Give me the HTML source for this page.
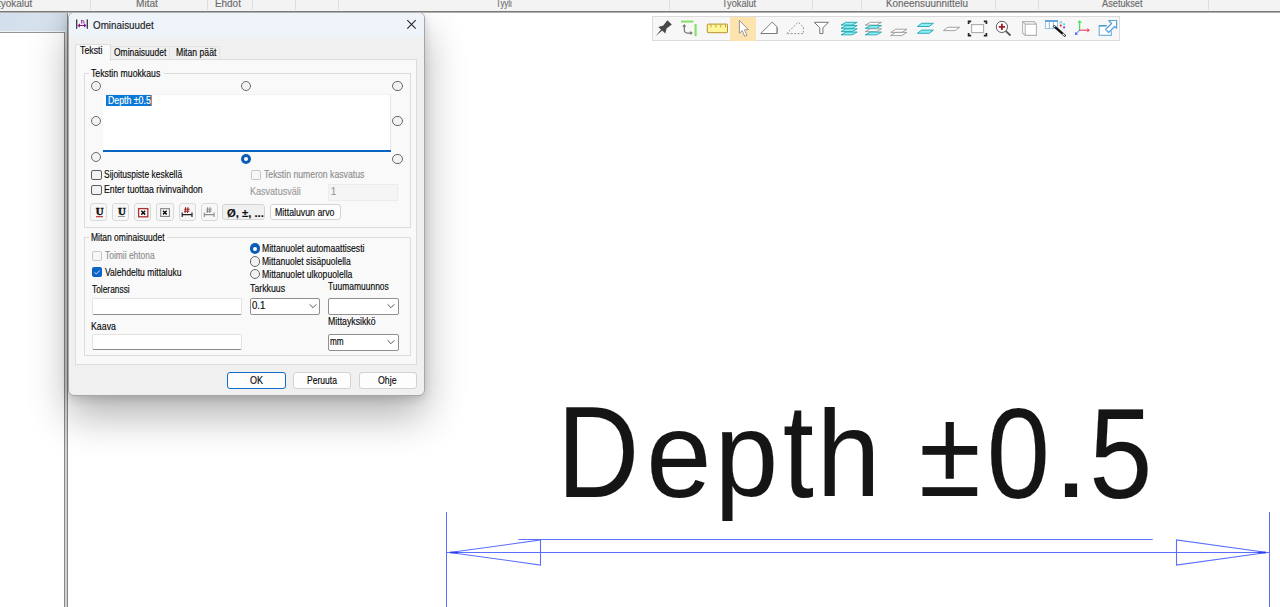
<!DOCTYPE html>
<html><head><meta charset="utf-8"><style>
html,body{margin:0;padding:0;width:1280px;height:607px;overflow:hidden;background:#fff;}
body{position:relative;font-family:"Liberation Sans",sans-serif;}
.b{position:absolute;box-sizing:border-box;}
.t{position:absolute;white-space:nowrap;line-height:1;-webkit-text-stroke:0.15px currentColor;}
</style></head><body>
<div style="position:absolute;left:0;top:0;width:1280px;height:13px;z-index:5;overflow:hidden">
<div class="b" style="left:0px;top:0px;width:1280px;height:11px;background:#f3f3f3;"></div>
<div class="b" style="left:0px;top:11px;width:1280px;height:1px;background:#7a7a7a;"></div>
<div class="b" style="left:0px;top:12px;width:1280px;height:0.6px;background:#b0b0b0;"></div>
<div class="b" style="left:90px;top:0px;width:1px;height:10px;background:#dedede;"></div>
<div class="b" style="left:207px;top:0px;width:1px;height:10px;background:#dedede;"></div>
<div class="b" style="left:252px;top:0px;width:1px;height:10px;background:#dedede;"></div>
<div class="b" style="left:295px;top:0px;width:1px;height:10px;background:#dedede;"></div>
<div class="b" style="left:338px;top:0px;width:1px;height:10px;background:#dedede;"></div>
<div class="b" style="left:669px;top:0px;width:1px;height:10px;background:#dedede;"></div>
<div class="b" style="left:812px;top:0px;width:1px;height:10px;background:#dedede;"></div>
<div class="b" style="left:861px;top:0px;width:1px;height:10px;background:#dedede;"></div>
<div class="b" style="left:995px;top:0px;width:1px;height:10px;background:#dedede;"></div>
<div class="b" style="left:1038px;top:0px;width:1px;height:10px;background:#dedede;"></div>
<div class="b" style="left:1208px;top:0px;width:1px;height:10px;background:#dedede;"></div>
<div class="t" style="left:-1.65px;top:-1.00px;font-size:10px;color:#6b6b6b;transform:scaleX(0.9930);transform-origin:0 0;">työkalut</div>
<div class="t" style="left:136.17px;top:-1.00px;font-size:10px;color:#6b6b6b;transform:scaleX(1.0108);transform-origin:0 0;">Mitat</div>
<div class="t" style="left:215.19px;top:-1.00px;font-size:10px;color:#6b6b6b;transform:scaleX(0.9905);transform-origin:0 0;">Ehdot</div>
<div class="t" style="left:495.82px;top:-1.00px;font-size:10px;color:#6b6b6b;transform:scaleX(0.7887);transform-origin:0 0;">Tyyli</div>
<div class="t" style="left:722.39px;top:-1.00px;font-size:10px;color:#6b6b6b;transform:scaleX(0.9175);transform-origin:0 0;">Työkalut</div>
<div class="t" style="left:886.49px;top:-1.00px;font-size:10px;color:#6b6b6b;transform:scaleX(0.9894);transform-origin:0 0;">Koneensuunnittelu</div>
<div class="t" style="left:1101.78px;top:-1.00px;font-size:10px;color:#6b6b6b;transform:scaleX(0.9220);transform-origin:0 0;">Asetukset</div>
</div>
<div class="b" style="left:0px;top:12px;width:67px;height:19.5px;background:linear-gradient(90deg,#d3dfec,#d7e2ee 70%,#cdd9e6);"></div>
<div class="b" style="left:0px;top:31px;width:65px;height:1px;background:#eef2f6;"></div>
<div class="b" style="left:0px;top:32px;width:65px;height:1px;background:#959595;"></div>
<div class="b" style="left:64px;top:32px;width:1px;height:575px;background:#8a8a8a;"></div>
<div class="b" style="left:65px;top:32px;width:2px;height:575px;background:#d2d2d2;"></div>
<div class="b" style="left:67px;top:12px;width:1px;height:595px;background:#858585;"></div>
<svg class="b" style="left:0;top:0" width="1280" height="607" viewBox="0 0 1280 607">
<g stroke="#5a6eff" stroke-width="1" fill="none">
<line x1="446.5" y1="512" x2="446.5" y2="607"/>
<line x1="1269.5" y1="512" x2="1269.5" y2="607"/>
<line x1="446.5" y1="552.5" x2="1270" y2="552.5"/>
<line x1="518.4" y1="539.5" x2="1152.7" y2="539.5"/>
<path d="M449.8 552.5 L540.5 540 L540.5 565 Z" stroke-width="1.1"/>
<path d="M1266.9 552.5 L1176.5 540 L1176.5 565 Z" stroke-width="1.1"/>
</g>
<line x1="450" y1="552.5" x2="458" y2="552.5" stroke="#2a40f0" stroke-width="1.6"/>
<line x1="1258" y1="552.5" x2="1266" y2="552.5" stroke="#2a40f0" stroke-width="1.6"/>
</svg>
<div class="t" style="left:0;top:0;font-size:129.36px;color:#151515;transform:translate(556.90px,388.00px) scaleX(0.8810);transform-origin:0 0;">D</div>
<div class="t" style="left:0;top:0;font-size:121.84px;color:#151515;transform:translate(646.27px,394.56px) scaleX(0.9620);transform-origin:0 0;">e</div>
<div class="t" style="left:0;top:0;font-size:119.78px;color:#151515;transform:translate(714.65px,395.39px) scaleX(0.9514);transform-origin:0 0;">p</div>
<div class="t" style="left:0;top:0;font-size:132.97px;color:#151515;transform:translate(782.92px,384.96px) scaleX(0.8334);transform-origin:0 0;">t</div>
<div class="t" style="left:0;top:0;font-size:122.96px;color:#151515;transform:translate(816.66px,393.40px) scaleX(0.9311);transform-origin:0 0;">h</div>
<div class="t" style="left:0;top:0;font-size:125.16px;color:#151515;transform:translate(918.94px,391.00px) scaleX(0.8962);transform-origin:0 0;">±</div>
<div class="t" style="left:0;top:0;font-size:128.18px;color:#151515;transform:translate(986.82px,389.50px) scaleX(0.8854);transform-origin:0 0;">0</div>
<div class="t" style="left:0;top:0;font-size:126.00px;color:#151515;transform:translate(1053.49px,391.00px) scaleX(1.0002);transform-origin:0 0;">.</div>
<div class="t" style="left:0;top:0;font-size:127.19px;color:#151515;transform:translate(1089.21px,390.51px) scaleX(0.8913);transform-origin:0 0;">5</div>
<div class="b" style="left:652.3px;top:16px;width:468.2px;height:25px;background:#f7f7f7;border:1px solid #dcdcdc;"></div>
<div class="b" style="left:730px;top:16.5px;width:26px;height:24px;background:#fde3ae;"></div>
<svg class="b" style="left:0;top:0" width="1280" height="50" viewBox="0 0 1280 50"><path d="M667.4 20.2 L671.8 24.5 L666.6 28.4 L665.2 33.4 L662.2 30.5 L655.8 35.9 L661.0 29.6 L658.3 27.1 L663.3 25.6 Z" fill="#474747"/><rect x="681" y="20.6" width="12.4" height="1.9" fill="#80e060"/><rect x="694.6" y="24" width="2" height="12.2" fill="#80e060"/><path d="M684.3 25.8 L684.3 30.2 Q684.6 33.1 688 33.1 L690.6 33.1" stroke="#737373" stroke-width="1.2" fill="none"/><path d="M682.3 26.8 L684.3 24.1 L686.3 26.8 Z" fill="#737373"/><path d="M690.2 31.1 L692.8 33.1 L690.2 35.1 Z" fill="#737373"/><rect x="707.3" y="24.1" width="20.2" height="8.6" fill="#fff59a" stroke="#b8902e" stroke-width="1" rx="0.6"/><rect x="710.5" y="24.6" width="1" height="2.8" fill="#b9a64a"/><rect x="715.3" y="24.6" width="1" height="2.8" fill="#b9a64a"/><rect x="720.2" y="24.6" width="1" height="2.8" fill="#b9a64a"/><rect x="725.0" y="24.6" width="1" height="2.8" fill="#b9a64a"/><path d="M739.4 20.3 L739.4 33.3 L742.2 30.6 L744.6 36.3 L746.9 35.4 L744.5 29.8 L748.3 29.6 Z" fill="#fff" stroke="#8d8d8d" stroke-width="0.9" stroke-linejoin="round"/><path d="M760.7 33.5 L772.3 22.1 L777.3 27.2 L777.3 33.5 Z" fill="#fff" stroke="#7b7b7b" stroke-width="1"/><rect x="776.3" y="27.3" width="1" height="5.7" fill="#9a9a9a"/><path d="M786.6 33.6 L798.2 22.1 L803.4 27.2 L803.4 33.6 Z" fill="none" stroke="#858585" stroke-width="0.9" stroke-dasharray="1.8 1.6"/><path d="M814.3 22.3 L828.4 22.3 L822.9 27.9 L822.9 33.6 L819.8 33.6 L819.8 27.9 Z" fill="#fff" stroke="#767676" stroke-width="1"/><path d="M846 22.3 L857.2 22.3 L852.2 25.1 L841 25.1 Z" fill="#8cf0f4" stroke="#22a4ad" stroke-width="0.9"/><path d="M846 25.55 L857.2 25.55 L852.2 28.35 L841 28.35 Z" fill="#8cf0f4" stroke="#22a4ad" stroke-width="0.9"/><path d="M846 28.8 L857.2 28.8 L852.2 31.6 L841 31.6 Z" fill="#8cf0f4" stroke="#22a4ad" stroke-width="0.9"/><path d="M846 32.05 L857.2 32.05 L852.2 34.849999999999994 L841 34.849999999999994 Z" fill="#8cf0f4" stroke="#22a4ad" stroke-width="0.9"/><path d="M870.3 22.3 L881.5 22.3 L876.5 25.1 L865.3 25.1 Z" fill="#fbfbfb" stroke="#8e8e8e" stroke-width="0.8"/><path d="M870.3 25.55 L881.5 25.55 L876.5 28.35 L865.3 28.35 Z" fill="#8cf0f4" stroke="#22a4ad" stroke-width="0.9"/><path d="M870.3 28.8 L881.5 28.8 L876.5 31.6 L865.3 31.6 Z" fill="#fbfbfb" stroke="#8e8e8e" stroke-width="0.8"/><path d="M870.3 32.05 L881.5 32.05 L876.5 34.849999999999994 L865.3 34.849999999999994 Z" fill="#8cf0f4" stroke="#22a4ad" stroke-width="0.9"/><path d="M895.8 29.2 L907.0 29.2 L902.0 32.4 L890.8 32.4 Z" fill="#fbfbfb" stroke="#8e8e8e" stroke-width="0.8"/><path d="M895.6 32.4 L906.8000000000001 32.4 L901.8000000000001 35.6 L890.6 35.6 Z" fill="#fbfbfb" stroke="#8e8e8e" stroke-width="0.8"/><path d="M921.6 23.3 L933.4 23.3 L929.1999999999999 26.5 L917.4 26.5 Z" fill="#8cf0f4" stroke="#22a4ad" stroke-width="0.9"/><path d="M921.6 30.1 L933.4 30.1 L929.1999999999999 33.300000000000004 L917.4 33.300000000000004 Z" fill="#8cf0f4" stroke="#22a4ad" stroke-width="0.9"/><path d="M947.8 27.3 L959.5999999999999 27.3 L955.1999999999999 30.6 L943.4 30.6 Z" fill="#fbfbfb" stroke="#8e8e8e" stroke-width="0.8"/><rect x="971.6" y="24.6" width="12" height="8" fill="#fff" stroke="#acacac" stroke-width="1.1"/><g stroke="#222" stroke-width="1.7" fill="none"><path d="M968.6 24 L968.6 21.4 L971.2 21.4"/><path d="M983.8 21.4 L986.4 21.4 L986.4 24"/><path d="M968.6 33 L968.6 35.6 L971.2 35.6"/><path d="M983.8 35.6 L986.4 35.6 L986.4 33"/></g><line x1="1005.6" y1="30.8" x2="1010.5" y2="35.5" stroke="#555" stroke-width="1.8"/><circle cx="1001.9" cy="26.9" r="5.6" fill="#fff" stroke="#555" stroke-width="0.95"/><path d="M998.8 26.9 L1005 26.9 M1001.9 23.7 L1001.9 29.9" stroke="#a21d25" stroke-width="1.8"/><path d="M1022.6 21.6 L1034.2 21.6 L1036.4 24.1 L1036.4 35.4 L1025.2 35.4 L1022.6 33 Z" fill="#fff" stroke="#b4b4b4" stroke-width="1.1"/><path d="M1022.6 21.6 L1025.2 24.1 L1036.4 24.1 M1025.2 24.1 L1025.2 35.4" stroke="#b4b4b4" stroke-width="1.1" fill="none"/><rect x="1045.4" y="20.8" width="12.2" height="7.8" fill="#fff" stroke="#8cbce4" stroke-width="0.9"/><rect x="1045" y="20.1" width="12.9" height="1.8" fill="#5a9fd8"/><path d="M1049.3 21.5 L1049.3 28.6 M1053.3 21.5 L1053.3 28.6" stroke="#7ab2e0" stroke-width="0.9"/><line x1="1054.3" y1="26.3" x2="1064.8" y2="35.6" stroke="#111" stroke-width="2.3" stroke-linecap="round"/><line x1="1062.6" y1="33.7" x2="1064.8" y2="35.6" stroke="#fff" stroke-width="1.2"/><line x1="1054" y1="26" x2="1055.2" y2="27.1" stroke="#eee" stroke-width="1.2"/><path d="M1059.8 21.4 L1061.8 23.4 M1061.8 21.4 L1059.8 23.4" stroke="#4cb8b0" stroke-width="0.9"/><rect x="1063.2" y="23.3" width="1.9" height="1.9" fill="#30e8f0"/><circle cx="1060.8" cy="25.6" r="1.1" fill="#e02828"/><circle cx="1064.1" cy="27.4" r="1.1" fill="#a040d8"/><line x1="1079.6" y1="30.2" x2="1079.6" y2="22.5" stroke="#3ee05a" stroke-width="1.2"/><path d="M1077.3 22.8 L1079.6 20.2 L1081.9 22.8 Z" fill="#3ee05a"/><line x1="1079.6" y1="30.2" x2="1087.6" y2="30.2" stroke="#f04868" stroke-width="1.2"/><path d="M1087.3 27.9 L1090 30.2 L1087.3 32.5 Z" fill="#f04868"/><line x1="1079.6" y1="30.2" x2="1076.6" y2="33.2" stroke="#3a58f0" stroke-width="1.1" stroke-dasharray="1 0.6"/><path d="M1075 35 L1075.4 31.9 L1078 34.6 Z" fill="#3a58f0"/><path d="M1106.5 25.6 L1099.2 25.6 L1099.2 35.4 L1111.3 35.4 L1111.3 30.8" fill="#fff" stroke="#78b4e0" stroke-width="1.2"/><rect x="1099" y="25" width="7.6" height="1.5" fill="#4e9ad6"/><path d="M1108.7 20.5 L1116.6 20.5 L1116.6 28.3 L1114.6 26.5 L1108.6 32.5 L1105.6 29.5 L1111.6 23.5 Z" fill="#fff" stroke="#5aa2da" stroke-width="1.2" stroke-linejoin="round"/></svg>
<div class="b" style="left:68px;top:12px;width:356.5px;height:384px;border-radius:6px;box-shadow:0 20px 40px rgba(0,0,0,0.30),0 3px 10px rgba(0,0,0,0.14);background:#f0f0f0;border:1px solid #a6a6a6;"></div>
<div class="b" style="left:69px;top:13px;width:354.5px;height:24.4px;background:#eef4fa;border-radius:5px 5px 0 0;"></div>
<svg class="b" style="left:0;top:0;overflow:visible" width="1" height="1">
<rect x="76.1" y="19.4" width="1.2" height="9.4" fill="#2a2a2a"/>
<rect x="86.7" y="19.4" width="1.2" height="9.4" fill="#2a2a2a"/>
<rect x="79" y="25" width="6" height="1" fill="#8c0d8c"/>
<path d="M77.4 25.5 L80 23.6 L80 27.4 Z M86.6 25.5 L84 23.6 L84 27.4 Z" fill="#8c0d8c"/>
<path d="M80.9 20.6 L81.7 20.3 L81.7 23.6 M81.7 21.2 Q82.4 20.3 83.2 20.6 Q83.9 20.9 83.9 21.8 L83.9 23.6" stroke="#8c0d8c" stroke-width="0.9" fill="none"/>
</svg>
<div class="t" style="left:93.33px;top:20.00px;font-size:11.3px;color:#1a1a1a;transform:scaleX(0.8712);transform-origin:0 0;">Ominaisuudet</div>
<svg class="b" style="left:405px;top:18px" width="13" height="13" viewBox="0 0 13 13">
<path d="M2.3 2.2 L10.7 10.6 M10.7 2.2 L2.3 10.6" stroke="#262626" stroke-width="1.1" fill="none"/>
</svg>
<div class="b" style="left:110.4px;top:46px;width:60px;height:14px;background:#f0f0f0;border:1px solid #e4e4e4;border-bottom:none;"></div>
<div class="b" style="left:170.4px;top:46px;width:50px;height:14px;background:#f0f0f0;border:1px solid #e4e4e4;border-bottom:none;border-left:none;"></div>
<div class="b" style="left:74.8px;top:59.3px;width:341.8px;height:305.9px;background:#f9f9f9;border:1px solid #dcdcdc;"></div>
<div class="b" style="left:74.8px;top:43.6px;width:35.8px;height:17px;background:#f9f9f9;border:1px solid #dcdcdc;border-bottom:none;"></div>
<div class="t" style="left:80.40px;top:46.00px;font-size:10px;color:#0a0a0a;transform:scaleX(0.8769);transform-origin:0 0;">Teksti</div>
<div class="t" style="left:113.60px;top:48.00px;font-size:10px;color:#0a0a0a;transform:scaleX(0.8471);transform-origin:0 0;">Ominaisuudet</div>
<div class="t" style="left:175.89px;top:48.00px;font-size:10px;color:#0a0a0a;transform:scaleX(0.8646);transform-origin:0 0;">Mitan päät</div>
<div class="b" style="left:84px;top:72.5px;width:326.7px;height:155px;border:1px solid #dcdcdc;"></div>
<div class="b" style="left:89px;top:70px;width:75px;height:6px;background:#f9f9f9;"></div>
<div class="t" style="left:91.10px;top:69.00px;font-size:10px;color:#0a0a0a;transform:scaleX(0.8713);transform-origin:0 0;">Tekstin muokkaus</div>
<div class="b" style="left:103.4px;top:93.8px;width:287.2px;height:57.4px;background:#fff;border-top:1px solid #f2f2f2;border-right:1px solid #e6e6e6;"></div>
<div class="b" style="left:103.4px;top:150.4px;width:287.6px;height:1.8px;background:#0563c1;"></div>
<div class="b" style="left:105.7px;top:94.9px;width:45.9px;height:11px;background:#0a78d8;"></div>
<div class="b" style="left:151px;top:94.9px;width:1px;height:11px;background:#f08030;"></div>
<div class="t" style="left:108.18px;top:96.00px;font-size:10px;color:#ffffff;transform:scaleX(0.8758);transform-origin:0 0;">Depth ±0.5</div>
<div class="b" style="left:90.7px;top:80.5px;width:10.6px;height:10.6px;border-radius:50%;border:1.1px solid #6a6a6a;background:#f2f2f2;"></div>
<div class="b" style="left:240.7px;top:80.5px;width:10.6px;height:10.6px;border-radius:50%;border:1.1px solid #6a6a6a;background:#f2f2f2;"></div>
<div class="b" style="left:392.0px;top:80.5px;width:10.6px;height:10.6px;border-radius:50%;border:1.1px solid #6a6a6a;background:#f2f2f2;"></div>
<div class="b" style="left:90.7px;top:115.9px;width:10.6px;height:10.6px;border-radius:50%;border:1.1px solid #6a6a6a;background:#f2f2f2;"></div>
<div class="b" style="left:392.0px;top:115.9px;width:10.6px;height:10.6px;border-radius:50%;border:1.1px solid #6a6a6a;background:#f2f2f2;"></div>
<div class="b" style="left:90.7px;top:151.7px;width:10.6px;height:10.6px;border-radius:50%;border:1.1px solid #6a6a6a;background:#f2f2f2;"></div>
<div class="b" style="left:240.7px;top:153.7px;width:10.6px;height:10.6px;border-radius:50%;background:#0c5cb8;"></div>
<div class="b" style="left:244px;top:157px;width:4px;height:4px;border-radius:50%;background:#fff;"></div>
<div class="b" style="left:392.0px;top:153.79999999999998px;width:10.6px;height:10.6px;border-radius:50%;border:1.1px solid #6a6a6a;background:#f2f2f2;"></div>
<div class="b" style="left:91.4px;top:169.5px;width:10.2px;height:10.2px;border:1.1px solid #5e5e5e;border-radius:2px;background:#f2f2f2;"></div>
<div class="t" style="left:104.02px;top:170.00px;font-size:10px;color:#0a0a0a;transform:scaleX(0.8463);transform-origin:0 0;">Sijoituspiste keskellä</div>
<div class="b" style="left:91.4px;top:184.8px;width:10.2px;height:10.2px;border:1.1px solid #5e5e5e;border-radius:2px;background:#f2f2f2;"></div>
<div class="t" style="left:103.69px;top:185.00px;font-size:10px;color:#0a0a0a;transform:scaleX(0.8702);transform-origin:0 0;">Enter tuottaa rivinvaihdon</div>
<div class="b" style="left:250.6px;top:169.6px;width:10.2px;height:10.2px;border:1.1px solid #c6c6c6;border-radius:2px;background:#f7f7f7;"></div>
<div class="t" style="left:263.81px;top:170.00px;font-size:10px;color:#8e8e8e;transform:scaleX(0.8680);transform-origin:0 0;">Tekstin numeron kasvatus</div>
<div class="t" style="left:249.86px;top:187.00px;font-size:10px;color:#9a9a9a;transform:scaleX(0.9040);transform-origin:0 0;">Kasvatusväli</div>
<div class="b" style="left:328.4px;top:184.2px;width:70px;height:16.4px;background:#f5f5f5;border:1px solid #ececec;"></div>
<div class="t" style="left:330.74px;top:187.00px;font-size:10px;color:#9a9a9a;">1</div>
<div class="b" style="left:90.25px;top:203.4px;width:17.2px;height:17.2px;border:1px solid #d9d9d9;border-radius:3px;background:#f7f7f7;"></div>
<div class="b" style="left:112.25px;top:203.4px;width:17.2px;height:17.2px;border:1px solid #d9d9d9;border-radius:3px;background:#f7f7f7;"></div>
<div class="b" style="left:134.3px;top:203.4px;width:17.2px;height:17.2px;border:1px solid #d9d9d9;border-radius:3px;background:#f7f7f7;"></div>
<div class="b" style="left:156.4px;top:203.4px;width:17.2px;height:17.2px;border:1px solid #d9d9d9;border-radius:3px;background:#f7f7f7;"></div>
<div class="b" style="left:178.5px;top:203.4px;width:17.2px;height:17.2px;border:1px solid #d9d9d9;border-radius:3px;background:#f7f7f7;"></div>
<div class="b" style="left:200.6px;top:203.4px;width:17.2px;height:17.2px;border:1px solid #d9d9d9;border-radius:3px;background:#f7f7f7;"></div>
<svg class="b" style="left:0px;top:0px;overflow:visible" width="1" height="1">
<g font-family="Liberation Serif" font-weight="bold" font-size="10.8">
<text x="95.7" y="215.2" fill="#111" stroke="#111" stroke-width="0.45">U</text>
<rect x="96" y="216" width="7" height="1.3" fill="#c04848"/>
<text x="117.9" y="215.2" fill="#111" stroke="#111" stroke-width="0.45">U</text>
<rect x="118" y="216" width="7" height="1" fill="#9a9a9a"/>
</g>
<rect x="138.6" y="208.6" width="9.2" height="8.2" fill="#fff" stroke="#a83232" stroke-width="1.3"/>
<path d="M141.3 210.8 L145.2 214.6 M145.2 210.8 L141.3 214.6" stroke="#111" stroke-width="1.5"/>
<rect x="160.7" y="208.7" width="8.7" height="7.7" fill="#fff" stroke="#808080" stroke-width="1.1"/>
<path d="M163 210.7 L166.7 214.4 M166.7 210.7 L163 214.4" stroke="#111" stroke-width="1.5"/>
<g stroke="#a01818" stroke-width="1"><path d="M185.6 207.2 L185.1 213 M188 207.2 L187.5 213 M184.3 209.2 L189.7 209.2 M184 211.2 L189.4 211.2"/></g>
<g stroke="#222" stroke-width="1.2"><path d="M181.6 214.6 L192.6 214.6 M182.2 212.6 L182.2 217 M192 212.6 L192 217"/></g>
<g stroke="#8a8a8a" stroke-width="1"><path d="M207.7 207.2 L207.2 213 M210.1 207.2 L209.6 213 M206.4 209.2 L211.8 209.2 M206.1 211.2 L211.5 211.2"/></g>
<g stroke="#8a8a8a" stroke-width="1.1"><path d="M203.7 214.6 L214.7 214.6 M204.3 212.6 L204.3 217 M214.1 212.6 L214.1 217"/></g>
</svg>
<div class="b" style="left:222.3px;top:203.6px;width:43.2px;height:16.8px;border:1px solid #d4d4d4;border-radius:3px;background:#f0f0f0;"></div>
<div class="t" style="left:226.64px;top:208.00px;font-size:10.5px;color:#111;transform:scaleX(1.0724);transform-origin:0 0;font-weight:bold;">Ø, ±, ...</div>
<div class="b" style="left:270.3px;top:203.6px;width:71.1px;height:16.8px;border:1px solid #d4d4d4;border-radius:3px;background:#fdfdfd;"></div>
<div class="t" style="left:275.18px;top:208.00px;font-size:10px;color:#0a0a0a;transform:scaleX(0.8773);transform-origin:0 0;">Mittaluvun arvo</div>
<div class="b" style="left:84px;top:237.3px;width:326.5px;height:118.5px;border:1px solid #dcdcdc;"></div>
<div class="b" style="left:89px;top:234px;width:78px;height:6px;background:#f9f9f9;"></div>
<div class="t" style="left:90.70px;top:233.00px;font-size:10px;color:#0a0a0a;transform:scaleX(0.8483);transform-origin:0 0;">Mitan ominaisuudet</div>
<div class="b" style="left:92.2px;top:250.6px;width:10.2px;height:10.2px;border:1.1px solid #c6c6c6;border-radius:2px;background:#f7f7f7;"></div>
<div class="t" style="left:104.91px;top:251.00px;font-size:10px;color:#8e8e8e;transform:scaleX(0.8427);transform-origin:0 0;">Toimii ehtona</div>
<div class="b" style="left:92.2px;top:267px;width:10.2px;height:10.2px;border-radius:2px;background:#0b63c6;"></div>
<svg class="b" style="left:92.2px;top:267px" width="10.2" height="10.2" viewBox="0 0 10 10"><path d="M2.4 5.2 L4.2 6.9 L7.7 3.3" stroke="#d8e4f6" stroke-width="0.9" fill="none"/></svg>
<div class="t" style="left:105.06px;top:268.00px;font-size:10px;color:#0a0a0a;transform:scaleX(0.8573);transform-origin:0 0;">Valehdeltu mittaluku</div>
<div class="b" style="left:249.6px;top:243.29999999999998px;width:10.6px;height:10.6px;border-radius:50%;background:#0c5cb8;"></div>
<div class="b" style="left:252.9px;top:246.6px;width:4px;height:4px;border-radius:50%;background:#fff;"></div>
<div class="b" style="left:249.6px;top:256.4px;width:10.6px;height:10.6px;border-radius:50%;border:1.1px solid #6a6a6a;background:#f2f2f2;"></div>
<div class="b" style="left:249.6px;top:268.59999999999997px;width:10.6px;height:10.6px;border-radius:50%;border:1.1px solid #6a6a6a;background:#f2f2f2;"></div>
<div class="t" style="left:261.99px;top:244.00px;font-size:10px;color:#0a0a0a;transform:scaleX(0.8616);transform-origin:0 0;">Mittanuolet automaattisesti</div>
<div class="t" style="left:262.00px;top:257.00px;font-size:10px;color:#0a0a0a;transform:scaleX(0.8533);transform-origin:0 0;">Mittanuolet sisäpuolella</div>
<div class="t" style="left:261.99px;top:270.00px;font-size:10px;color:#0a0a0a;transform:scaleX(0.8651);transform-origin:0 0;">Mittanuolet ulkopuolella</div>
<div class="t" style="left:92.01px;top:285.00px;font-size:10px;color:#0a0a0a;transform:scaleX(0.8379);transform-origin:0 0;">Toleranssi</div>
<div class="t" style="left:250.00px;top:284.00px;font-size:10px;color:#0a0a0a;transform:scaleX(0.8782);transform-origin:0 0;">Tarkkuus</div>
<div class="t" style="left:328.31px;top:282.00px;font-size:10px;color:#0a0a0a;transform:scaleX(0.8455);transform-origin:0 0;">Tuumamuunnos</div>
<div class="b" style="left:92.2px;top:298.3px;width:149.5px;height:16.5px;background:#fff;border:1px solid #e3e3e3;border-bottom:1px solid #8a8a8a;border-radius:2px;"></div>
<div class="b" style="left:249.8px;top:298.1px;width:70.4px;height:16.7px;background:#fff;border:1px solid #8f8f8f;border-radius:2px;"></div>
<svg class="b" style="left:307.90000000000003px;top:301.45000000000005px" width="10" height="10" viewBox="0 0 10 10"><path d="M1.6 3.3 L5 6.7 L8.4 3.3" stroke="#555" stroke-width="1" fill="none"/></svg>
<div class="t" style="left:251.53px;top:301.00px;font-size:10px;color:#0a0a0a;transform:scaleX(0.9599);transform-origin:0 0;">0.1</div>
<div class="b" style="left:327.8px;top:298.1px;width:70.9px;height:16.7px;background:#fff;border:1px solid #8f8f8f;border-radius:2px;"></div>
<svg class="b" style="left:386.40000000000003px;top:301.45000000000005px" width="10" height="10" viewBox="0 0 10 10"><path d="M1.6 3.3 L5 6.7 L8.4 3.3" stroke="#555" stroke-width="1" fill="none"/></svg>
<div class="t" style="left:91.38px;top:322.00px;font-size:10px;color:#0a0a0a;transform:scaleX(0.8789);transform-origin:0 0;">Kaava</div>
<div class="t" style="left:327.58px;top:317.00px;font-size:10px;color:#0a0a0a;transform:scaleX(0.8738);transform-origin:0 0;">Mittayksikkö</div>
<div class="b" style="left:92.4px;top:334.3px;width:149.3px;height:16.2px;background:#fff;border:1px solid #e3e3e3;border-bottom:1px solid #8a8a8a;border-radius:2px;"></div>
<div class="b" style="left:327.8px;top:333.6px;width:70.9px;height:17px;background:#fff;border:1px solid #8f8f8f;border-radius:2px;"></div>
<svg class="b" style="left:386.40000000000003px;top:337.1px" width="10" height="10" viewBox="0 0 10 10"><path d="M1.6 3.3 L5 6.7 L8.4 3.3" stroke="#555" stroke-width="1" fill="none"/></svg>
<div class="t" style="left:329.65px;top:337.00px;font-size:10px;color:#0a0a0a;transform:scaleX(0.8215);transform-origin:0 0;">mm</div>
<div class="b" style="left:226.9px;top:372px;width:58.9px;height:16.7px;border:1.3px solid #0f6cc8;border-radius:3px;background:#fdfdfd;"></div>
<div class="t" style="left:249.67px;top:376.00px;font-size:10px;color:#0a0a0a;transform:scaleX(0.9017);transform-origin:0 0;">OK</div>
<div class="b" style="left:293.4px;top:372px;width:58.1px;height:16.7px;border:1px solid #d2d2d2;border-radius:3px;background:#fdfdfd;"></div>
<div class="t" style="left:307.00px;top:376.00px;font-size:10px;color:#0a0a0a;transform:scaleX(0.8537);transform-origin:0 0;">Peruuta</div>
<div class="b" style="left:358.9px;top:372px;width:58.4px;height:16.7px;border:1px solid #d2d2d2;border-radius:3px;background:#fdfdfd;"></div>
<div class="t" style="left:378.09px;top:376.00px;font-size:10px;color:#0a0a0a;transform:scaleX(0.8760);transform-origin:0 0;">Ohje</div>
</body></html>
